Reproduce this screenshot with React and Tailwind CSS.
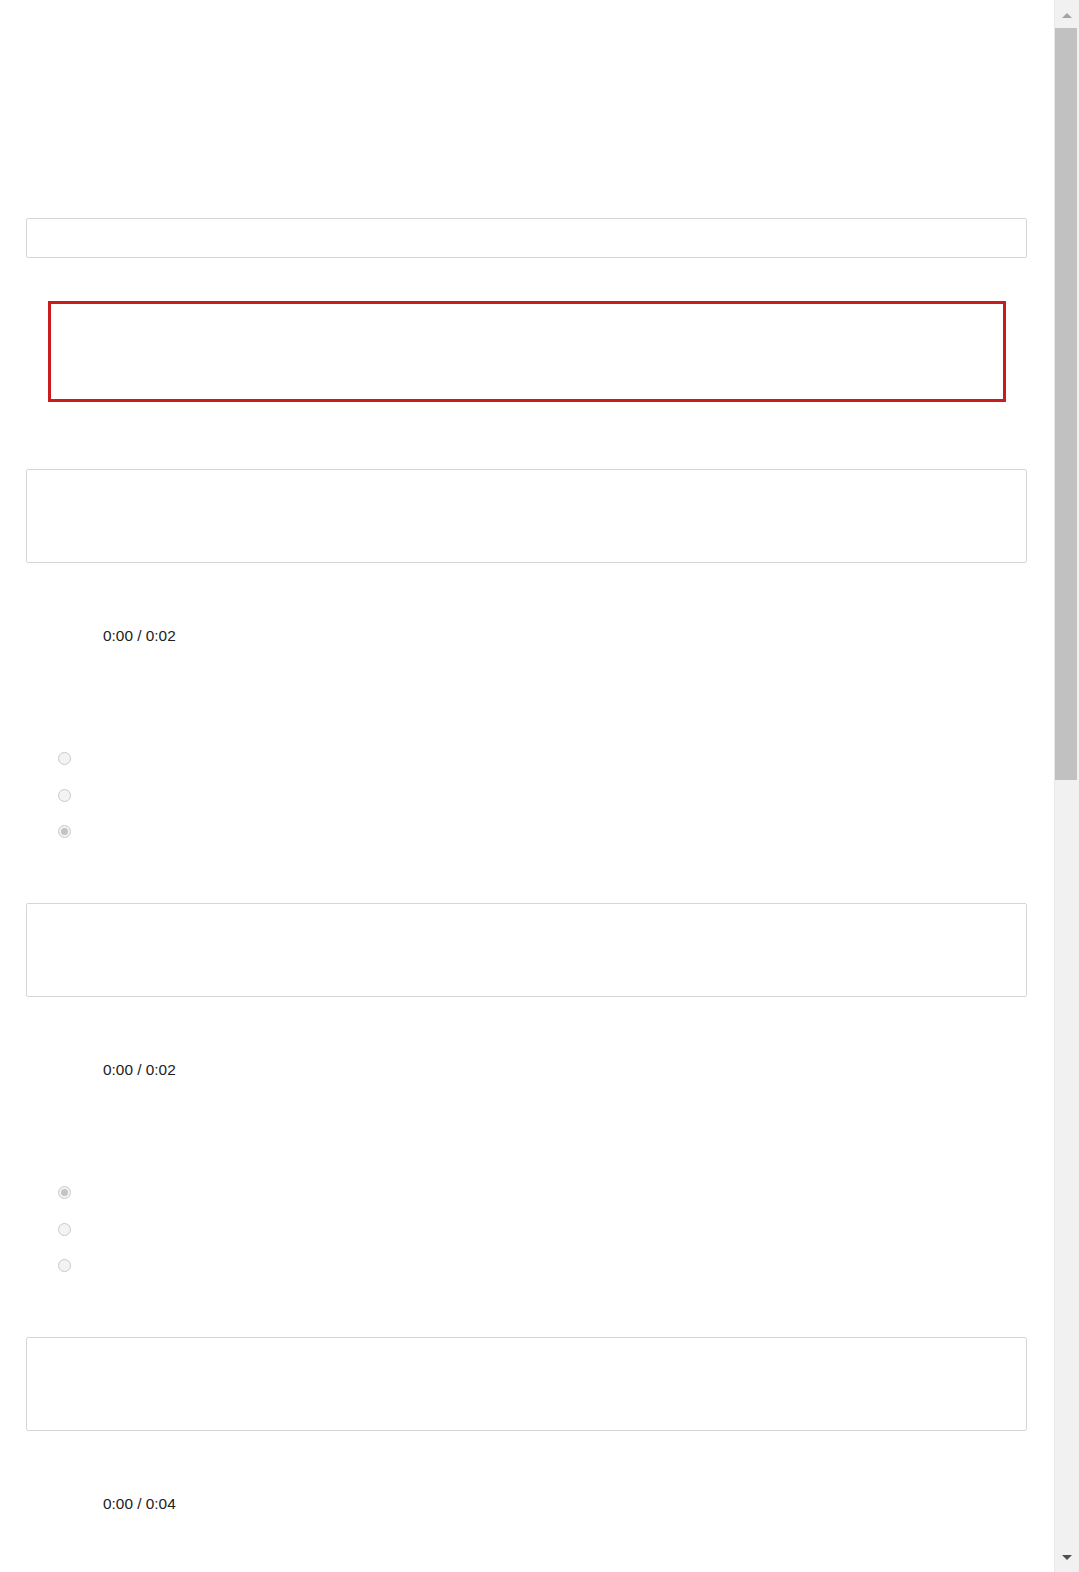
import React from 'react';

function Radio({ checked }) {
  return (
    <div className="h-[36.5px] flex items-center pl-[31.5px]">
      <div className="w-[13px] h-[13px] rounded-full border border-[#c9c9c9] bg-[#f3f3f3] flex items-center justify-center">
        {checked && <div className="w-[7px] h-[7px] rounded-full bg-[#c4c4c4]" />}
      </div>
    </div>
  );
}

function Block({ time, checkedIndex, last }) {
  return (
    <div className="flex flex-col">
      {/* Answer box */}
      <div className="h-[94px] w-full border border-[#d3d7dc] rounded-[2px] bg-white" />

      {/* Audio player (only time readout visible) */}
      <div className="h-[54px] mt-[45.5px] flex items-center pl-[77px]">
        <span className="text-[15.4px] text-[#222]" style={{ fontFamily: '"Liberation Sans", Arial, sans-serif' }}>
          {time}
        </span>
      </div>

      {!last && (
        <div className="flex flex-col mt-[78px] mb-[53px]">
          {[0, 1, 2].map((i) => (
            <Radio key={i} checked={i === checkedIndex} />
          ))}
        </div>
      )}
    </div>
  );
}

function Scrollbar() {
  return (
    <div className="w-[25px] shrink-0 h-[1572px] bg-[#f1f1f1] flex flex-col border-l border-[#e8e8e8]">
      <div className="h-[28px] pt-[2px] flex items-center justify-center">
        <div className="w-0 h-0 border-l-[5px] border-r-[5px] border-b-[5px] border-l-transparent border-r-transparent border-b-[#a3a3a3]" />
      </div>
      <div className="h-[752px] mr-[2px] bg-[#c1c1c1]" />
      <div className="flex-1" />
      <div className="h-[30px] flex items-center justify-center">
        <div className="w-0 h-0 border-l-[5px] border-r-[5px] border-t-[5px] border-l-transparent border-r-transparent border-t-[#505050]" />
      </div>
    </div>
  );
}

export default function App() {
  return (
    <div className="w-[1079px] h-[1572px] overflow-hidden flex bg-white">
      <div className="flex-1 flex flex-col pt-[218px] pl-[26px] pr-[27px]">
        {/* Text input */}
        <div className="h-[40px] w-full border border-[#d3d7dc] rounded-[2px]" />

        {/* Highlighted error box */}
        <div className="h-[101px] mt-[43px] ml-[22px] mr-[21px] border-[3px] border-[#c81c1f]" />

        <div className="mt-[67px] flex flex-col">
          <Block time="0:00 / 0:02" checkedIndex={2} />
          <Block time="0:00 / 0:02" checkedIndex={0} />
          <Block time="0:00 / 0:04" last />
        </div>
      </div>
      <Scrollbar />
    </div>
  );
}
